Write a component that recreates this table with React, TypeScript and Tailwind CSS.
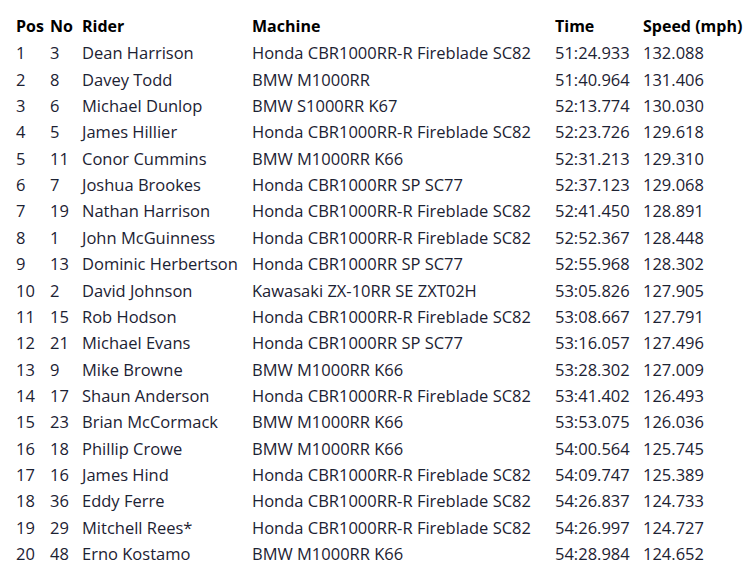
import React from 'react';

interface Result {
  pos: number;
  no: number;
  rider: string;
  machine: string;
  time: string;
  speed: string;
}

const results: Result[] = [
  { pos: 1, no: 3, rider: 'Dean Harrison', machine: 'Honda CBR1000RR-R Fireblade SC82', time: '51:24.933', speed: '132.088' },
  { pos: 2, no: 8, rider: 'Davey Todd', machine: 'BMW M1000RR', time: '51:40.964', speed: '131.406' },
  { pos: 3, no: 6, rider: 'Michael Dunlop', machine: 'BMW S1000RR K67', time: '52:13.774', speed: '130.030' },
  { pos: 4, no: 5, rider: 'James Hillier', machine: 'Honda CBR1000RR-R Fireblade SC82', time: '52:23.726', speed: '129.618' },
  { pos: 5, no: 11, rider: 'Conor Cummins', machine: 'BMW M1000RR K66', time: '52:31.213', speed: '129.310' },
  { pos: 6, no: 7, rider: 'Joshua Brookes', machine: 'Honda CBR1000RR SP SC77', time: '52:37.123', speed: '129.068' },
  { pos: 7, no: 19, rider: 'Nathan Harrison', machine: 'Honda CBR1000RR-R Fireblade SC82', time: '52:41.450', speed: '128.891' },
  { pos: 8, no: 1, rider: 'John McGuinness', machine: 'Honda CBR1000RR-R Fireblade SC82', time: '52:52.367', speed: '128.448' },
  { pos: 9, no: 13, rider: 'Dominic Herbertson', machine: 'Honda CBR1000RR SP SC77', time: '52:55.968', speed: '128.302' },
  { pos: 10, no: 2, rider: 'David Johnson', machine: 'Kawasaki ZX-10RR SE ZXT02H', time: '53:05.826', speed: '127.905' },
  { pos: 11, no: 15, rider: 'Rob Hodson', machine: 'Honda CBR1000RR-R Fireblade SC82', time: '53:08.667', speed: '127.791' },
  { pos: 12, no: 21, rider: 'Michael Evans', machine: 'Honda CBR1000RR SP SC77', time: '53:16.057', speed: '127.496' },
  { pos: 13, no: 9, rider: 'Mike Browne', machine: 'BMW M1000RR K66', time: '53:28.302', speed: '127.009' },
  { pos: 14, no: 17, rider: 'Shaun Anderson', machine: 'Honda CBR1000RR-R Fireblade SC82', time: '53:41.402', speed: '126.493' },
  { pos: 15, no: 23, rider: 'Brian McCormack', machine: 'BMW M1000RR K66', time: '53:53.075', speed: '126.036' },
  { pos: 16, no: 18, rider: 'Phillip Crowe', machine: 'BMW M1000RR K66', time: '54:00.564', speed: '125.745' },
  { pos: 17, no: 16, rider: 'James Hind', machine: 'Honda CBR1000RR-R Fireblade SC82', time: '54:09.747', speed: '125.389' },
  { pos: 18, no: 36, rider: 'Eddy Ferre', machine: 'Honda CBR1000RR-R Fireblade SC82', time: '54:26.837', speed: '124.733' },
  { pos: 19, no: 29, rider: 'Mitchell Rees*', machine: 'Honda CBR1000RR-R Fireblade SC82', time: '54:26.997', speed: '124.727' },
  { pos: 20, no: 48, rider: 'Erno Kostamo', machine: 'BMW M1000RR K66', time: '54:28.984', speed: '124.652' },
];

const cols = 'grid grid-cols-[34px_32px_170px_303px_88px_1fr] h-[26.37px] items-center whitespace-nowrap';

const App: React.FC = () => {
  return (
    <div className="w-[745px] h-[567px] bg-white pl-4 pt-[14px] font-['Open_Sans',sans-serif] text-[16.5px] leading-none">
      <div className={`${cols} pb-[2px] text-[16px] font-bold text-black`}>
        <span>Pos</span>
        <span>No</span>
        <span>Rider</span>
        <span>Machine</span>
        <span>Time</span>
        <span>Speed (mph)</span>
      </div>
      {results.map((r) => (
        <div key={r.pos} className={`${cols} text-[#1c2233]`}>
          <span>{r.pos}</span>
          <span>{r.no}</span>
          <span>{r.rider}</span>
          <span>{r.machine}</span>
          <span>{r.time}</span>
          <span>{r.speed}</span>
        </div>
      ))}
    </div>
  );
};

export default App;
